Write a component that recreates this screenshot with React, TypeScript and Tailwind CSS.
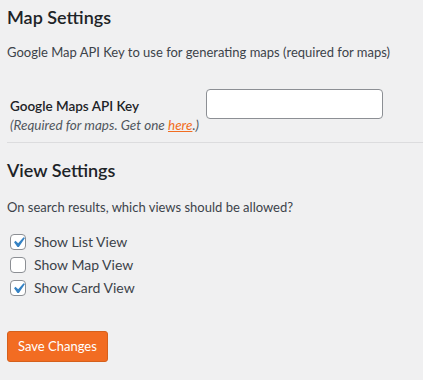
export default function App() {
  const views = [
    { label: "Show List View", checked: true },
    { label: "Show Map View", checked: false },
    { label: "Show Card View", checked: true },
  ];

  return (
    <div
      className="min-h-[380px] bg-[#f0f0f1] pl-[7px] pt-[4px] text-[13px] text-[#3c434a]"
      style={{ fontFamily: '"Segoe UI", Lato, "Liberation Sans", sans-serif' }}
    >
      <h2 className="text-[18px] font-semibold leading-[26px] text-[#1d2327]">Map Settings</h2>
      <p className="mt-[13px] leading-[18px]">
        Google Map API Key to use for generating maps (required for maps)
      </p>

      <div className="mt-[28px] flex">
        <div className="w-[199px] pl-[3px] pt-[7px]">
          <div className="text-[13.5px] font-semibold leading-[20px] text-[#1d2327]">
            Google Maps API Key
          </div>
          <div className="text-[13.5px] italic leading-[18px] text-[#50575e]">
            (Required for maps. Get one{" "}
            <a href="#" className="text-[#f26d21] underline">
              here
            </a>
            .)
          </div>
        </div>
        <input
          type="text"
          className="h-[30px] w-[177px] rounded-[4px] border border-[#8c8f94] bg-white px-2 outline-none"
        />
      </div>

      <div className="mt-[8px] h-px bg-[#dcdcde]" />

      <h2 className="mt-[14px] text-[18px] font-semibold leading-[26px] text-[#1d2327]">View Settings</h2>
      <p className="mt-[15px] leading-[18px]">On search results, which views should be allowed?</p>

      <div className="mt-[18px] flex flex-col gap-[7px] pl-[3px]">
        {views.map((v) => (
          <label key={v.label} className="flex items-center gap-[8px] text-[14px] leading-[16px]">
            <span className="flex h-4 w-4 items-center justify-center overflow-visible rounded-[4px] border border-[#8c8f94] bg-white">
              {v.checked && (
                <svg viewBox="0 0 20 20" className="-m-[3px] h-[21px] w-[21px] shrink-0">
                  <path
                    d="M14.83 4.89l1.34.94-5.81 8.38H9.02L5.78 9.67l1.34-1.25 2.57 2.4z"
                    fill="#3582c4"
                  />
                </svg>
              )}
            </span>
            <span>{v.label}</span>
          </label>
        ))}
      </div>

      <button
        type="button"
        className="mt-[35px] h-[31px] rounded-[3px] border border-[#d5601c] bg-[#f26c22] px-[10px] text-[13px] leading-[29px] text-white"
      >
        Save Changes
      </button>
    </div>
  );
}
